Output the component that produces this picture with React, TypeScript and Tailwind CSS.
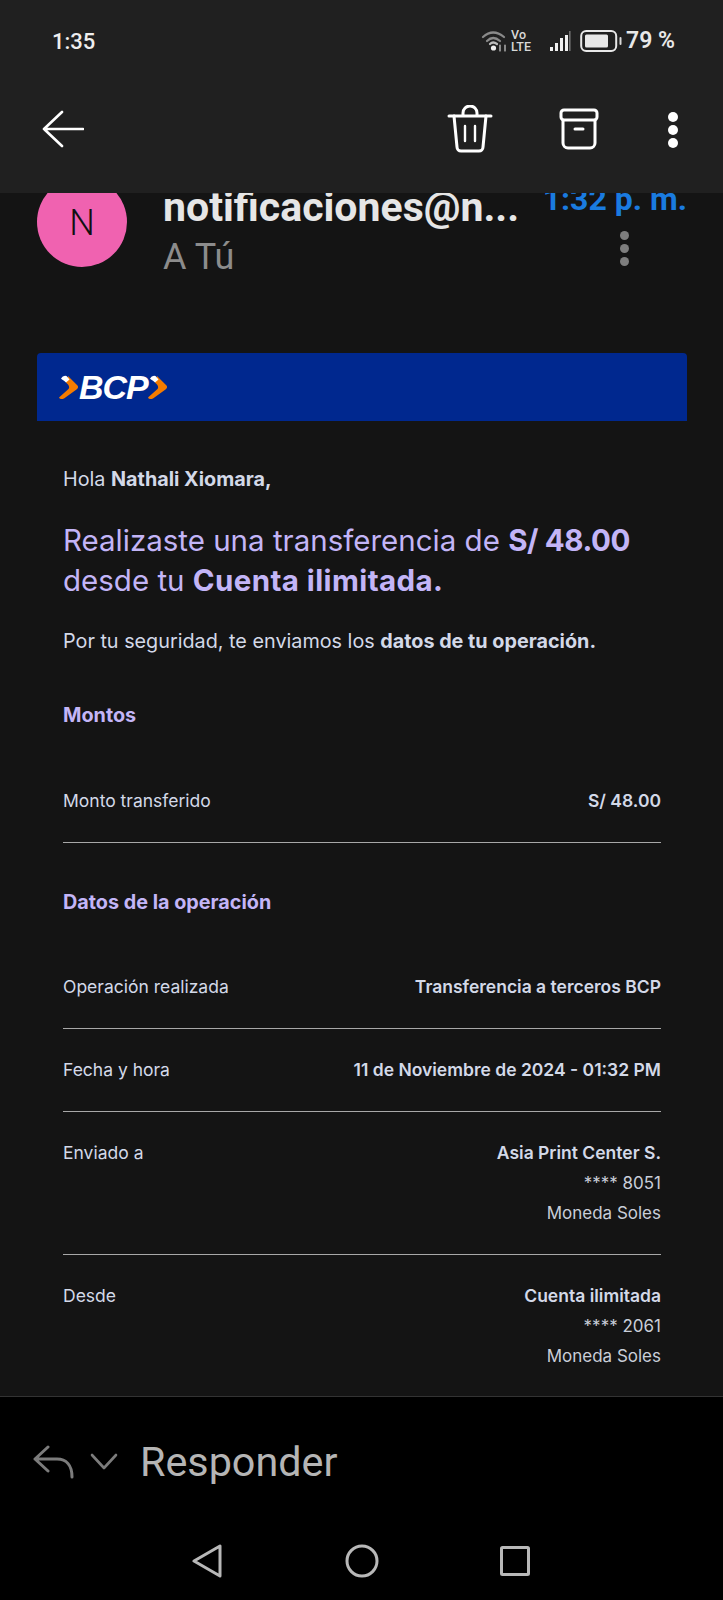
const sans = "font-['Inter','Liberation_Sans',sans-serif]";

function StatusIcons() {
  return (
    <div className="flex items-center text-[#e8e8e8]">
      <svg width="27" height="24" viewBox="0 0 27 24" fill="none" stroke="#8a8a8a" strokeWidth="2.2" strokeLinecap="round">
        <path d="M2 8 Q12 -1 23 8" />
        <path d="M6 12 Q12 6 19 12" />
        <path d="M9 15 Q12 12 16 15" stroke="#bdbdbd" />
        <circle cx="12.5" cy="19" r="2.6" fill="#eeeeee" stroke="none" />
        <path d="M19 16v6M24 16v6" stroke="#cfcfcf" strokeWidth="1.2" />
      </svg>
      <div className="ml-[3px] flex flex-col font-['Roboto',sans-serif] text-[12.5px] leading-[12px] font-medium text-[#d8d8d8]">
        <span>Vo</span>
        <span>LTE</span>
      </div>
      <svg className="ml-[18px]" width="22" height="22" viewBox="0 0 22 22" fill="#efefef">
        <rect x="1" y="17" width="3" height="4" />
        <rect x="6" y="13" width="3" height="8" />
        <rect x="11" y="8" width="3" height="13" />
        <rect x="16" y="5" width="3" height="16" />
        <rect x="20" y="1" width="1.6" height="20" fill="#6f6f6f" />
      </svg>
      <svg className="ml-[9px]" width="42" height="24" viewBox="0 0 42 24" fill="none">
        <rect x="1.2" y="2" width="35" height="20" rx="5" stroke="#e8e8e8" strokeWidth="2" />
        <rect x="5" y="5.5" width="23" height="13" rx="1.5" fill="#e8e8e8" />
        <rect x="39.5" y="8" width="2" height="8" rx="1" fill="#d8d8d8" />
      </svg>
      <span className="ml-[4px] font-['Roboto',sans-serif] text-[23px] font-semibold">79 %</span>
    </div>
  );
}

function TopBar() {
  return (
    <header className="relative z-10 flex h-[193px] shrink-0 flex-col bg-[#202020] pl-[42px] pr-[45px]">
      <div className="flex h-[82px] items-center justify-between pl-[10px] pr-[3px]">
        <span className="font-['Roboto',sans-serif] text-[22px] font-medium text-[#eeeeee]">1:35</span>
        <StatusIcons />
      </div>
      <div className="flex h-[94px] items-center justify-between">
        <svg width="42" height="38" viewBox="0 0 42 38" fill="none" stroke="white" strokeWidth="2.6" strokeLinecap="round" strokeLinejoin="round">
          <path d="M41 19H2M20 2 2 19l18 17" />
        </svg>
        <div className="flex items-center">
          <svg width="46" height="48" viewBox="0 0 46 48" fill="none" stroke="white" strokeWidth="3" strokeLinecap="round" strokeLinejoin="round">
            <path d="M2 11h42M16 11V8a7 7 0 0 1 14 0v3" />
            <path d="M7 11l3 31a4 4 0 0 0 4 4h18a4 4 0 0 0 4-4l3-31" />
            <path d="M18 21v15M28 21v15" strokeWidth="2.4" />
          </svg>
          <svg className="ml-[66px]" width="40" height="42" viewBox="0 0 40 42" fill="none" stroke="white" strokeWidth="3" strokeLinecap="round" strokeLinejoin="round">
            <rect x="2" y="2" width="36" height="10" rx="3" />
            <path d="M4 12v23a5 5 0 0 0 5 5h22a5 5 0 0 0 5-5V12" />
            <path d="M16 21h8" />
          </svg>
          <div className="ml-[69px] mt-[2px] flex flex-col gap-[3px]">
            <span className="h-[10px] w-[10px] rounded-full bg-white" />
            <span className="h-[10px] w-[10px] rounded-full bg-white" />
            <span className="h-[10px] w-[10px] rounded-full bg-white" />
          </div>
        </div>
      </div>
    </header>
  );
}

function SenderRow() {
  return (
    <div className="-mt-[16px] flex pl-[37px] pr-[36px]">
      <div className="flex h-[90px] w-[90px] shrink-0 items-center justify-center rounded-full bg-[#f062b0] pt-[1px] font-['Roboto',sans-serif] text-[36px] font-light text-[#111111]">
        N
      </div>
      <div className="ml-[36px] flex w-[372px] shrink-0 flex-col font-['Roboto',sans-serif]">
        <span className="mt-[6px] text-[41px] leading-[48px] font-bold whitespace-nowrap text-[#e6e6e6]">notificaciones@n...</span>
        <span className="mt-[6px] text-[36px] leading-[40px] text-[#8c8c8c]">A Tú</span>
      </div>
      <div className="-ml-[20px] flex flex-1 flex-col items-end font-['Roboto',sans-serif]">
        <span className="mt-[2px] text-[32px] leading-[40px] font-bold whitespace-nowrap text-[#1a7be0]">1:32 p. m.</span>
        <div className="mt-[12px] mr-[58px] flex flex-col gap-[4px]">
          <span className="h-[9px] w-[9px] rounded-full bg-[#7e7e7e]" />
          <span className="h-[9px] w-[9px] rounded-full bg-[#7e7e7e]" />
          <span className="h-[9px] w-[9px] rounded-full bg-[#7e7e7e]" />
        </div>
      </div>
    </div>
  );
}

function Row({ label, lines, last }: { label: string; lines: string[]; last?: boolean }) {
  return (
    <div className={`flex justify-between ${last ? "" : "border-b border-[#a8a8a8] pb-[26px]"} pt-[26px]`}>
      <span className="text-[#d3d9e8]">{label}</span>
      <div className="flex flex-col items-end">
        {lines.map((l, i) => (
          <span key={l} className={i === 0 ? "font-semibold text-[#d3d9e8]" : "text-[17px] text-[#c9ced9]"}>{l}</span>
        ))}
      </div>
    </div>
  );
}

function Chevron() {
  return (
    <svg width="20" height="25" viewBox="0 0 20 25" className="shrink-0">
      <path d="M9 1 L18.5 10.5 Q20 12.5 17.5 14.5 L5 23.5 Q1 25 0 22.5 L9.5 14 Q11 12 9 9.5 L7 7.5 Z" fill="#f57c00" />
      <path d="M2 3.5 Q4 0 7.5 1 L10.5 4.5 L7 7.5 Q5 5.5 3 4.5 Z" fill="white" />
    </svg>
  );
}

function EmailBody() {
  return (
    <div className={`ml-[37px] mr-[36px] mt-[76px] ${sans}`}>
      <div className="flex h-[68px] items-center rounded-t-[4px] bg-[#00288f] pl-[22px]">
        <Chevron />
        <span className="font-['Liberation_Sans',sans-serif] text-[34px] leading-[34px] font-bold tracking-[-1px] text-white italic">BCP</span>
        <Chevron />
      </div>
      <div className="px-[26px] text-[17.5px] leading-[30px]">
        <p className="mt-[43px] text-[19.8px] text-[#d3d9e8]">
          Hola <b>Nathali Xiomara,</b>
        </p>
        <p className="mt-[26px] text-[29.5px] leading-[40px] text-[#c3b5f7]">
          Realizaste una transferencia de <b className="tracking-[-0.4px]">S/ 48.00</b>
          <br />
          desde tu <b className="tracking-[0.4px]">Cuenta ilimitada.</b>
        </p>
        <p className="mt-[26px] text-[19.8px] text-[#d3d9e8]">
          Por tu seguridad, te enviamos los <b>datos de tu operación.</b>
        </p>
        <h3 className="mt-[44px] text-[19.8px] font-bold text-[#c3b5f7]">Montos</h3>
        <div className="mt-[30px]">
          <Row label="Monto transferido" lines={["S/ 48.00"]} />
        </div>
        <h3 className="mt-[44px] text-[19.8px] font-bold text-[#c3b5f7]">Datos de la operación</h3>
        <div className="mt-[29px] flex flex-col">
          <Row label="Operación realizada" lines={["Transferencia a terceros BCP"]} />
          <Row label="Fecha y hora" lines={["11 de Noviembre de 2024 - 01:32 PM"]} />
          <Row label="Enviado a" lines={["Asia Print Center S.", "**** 8051", "Moneda Soles"]} />
          <Row label="Desde" lines={["Cuenta ilimitada", "**** 2061", "Moneda Soles"]} last />
        </div>
      </div>
    </div>
  );
}

function BottomBar() {
  return (
    <footer className="flex h-[204px] shrink-0 flex-col border-t border-[#333333] bg-black">
      <div className="flex items-center pl-[33px] pt-[38px]">
        <svg width="42" height="34" viewBox="0 0 42 34" fill="none" stroke="#7c7c7c" strokeWidth="3" strokeLinecap="round" strokeLinejoin="round">
          <path d="M15 2 2 14l13 12M2 14h22c9 0 15 6 15 18" />
        </svg>
        <svg className="ml-[15px]" width="28" height="18" viewBox="0 0 28 18" fill="none" stroke="#7c7c7c" strokeWidth="2.6" strokeLinecap="round" strokeLinejoin="round">
          <path d="M2 2l12 13L26 2" />
        </svg>
        <span className="ml-[22px] font-['Roboto',sans-serif] text-[41.3px] leading-[54px] text-[#b5b5b5]">Responder</span>
      </div>
      <div className="mt-[55px] flex items-center pl-[192px]">
        <svg width="30" height="34" viewBox="0 0 30 34" fill="none" stroke="#b8b8b8" strokeWidth="3" strokeLinejoin="round">
          <path d="M28 2v30L2 17z" />
        </svg>
        <svg className="ml-[123px]" width="34" height="34" viewBox="0 0 34 34" fill="none" stroke="#b8b8b8" strokeWidth="3">
          <circle cx="17" cy="17" r="15" />
        </svg>
        <svg className="ml-[121px]" width="30" height="30" viewBox="0 0 30 30" fill="none" stroke="#b8b8b8" strokeWidth="3" strokeLinejoin="round">
          <rect x="1.5" y="1.5" width="27" height="27" rx="1" />
        </svg>
      </div>
    </footer>
  );
}

export default function App() {
  return (
    <div className="flex h-[1600px] w-[723px] flex-col overflow-hidden bg-[#141414]">
      <TopBar />
      <main className="min-h-0 flex-1 overflow-hidden">
        <SenderRow />
        <EmailBody />
      </main>
      <BottomBar />
    </div>
  );
}
